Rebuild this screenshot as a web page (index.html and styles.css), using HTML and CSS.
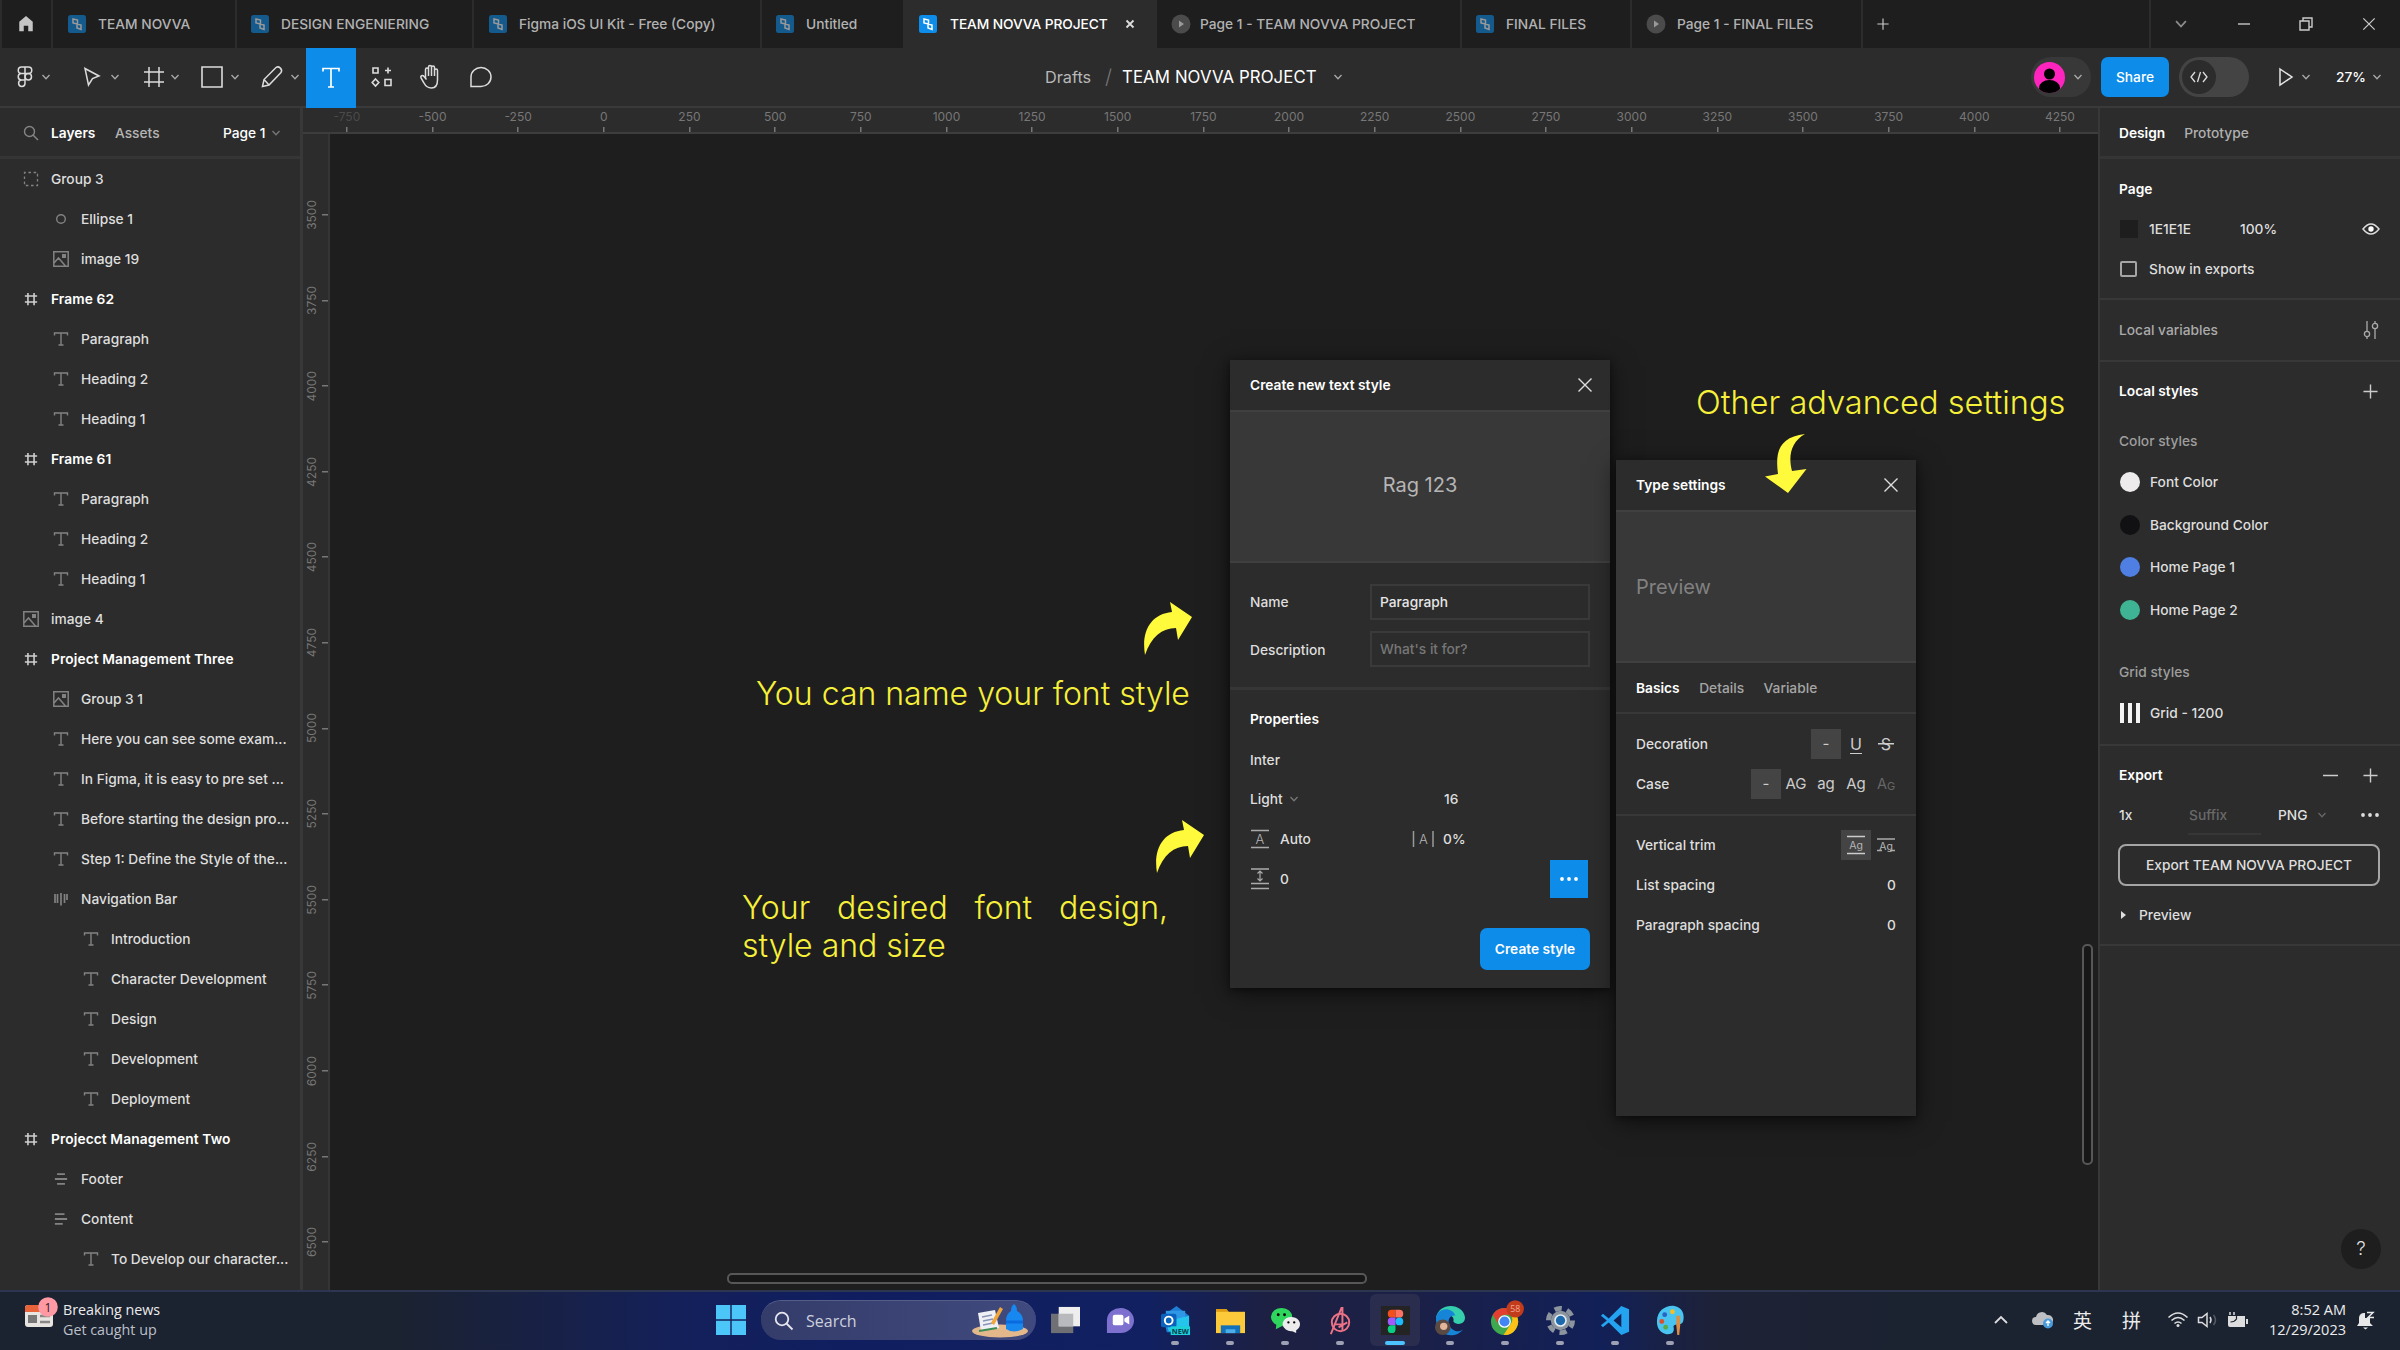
FILE: index.html
```html
<!DOCTYPE html>
<html lang="en">
<head>
<meta charset="utf-8">
<title>TEAM NOVVA PROJECT</title>
<link rel="stylesheet" href="styles.css">
</head>
<body>
<svg class="defs" aria-hidden="true">
  <symbol id="chev" viewBox="0 0 10 10"><path d="M1.5 3l3.5 3.8L8.5 3" fill="none" stroke="currentColor" stroke-width="1.3"/></symbol>
  <symbol id="file" viewBox="0 0 18 18"><rect width="18" height="18" rx="2.5" fill="#0d8ce9"/><path d="M5 4l4.500 1v4L5 8zM9 9l4 1v4.500l-4-1.500z" fill="none" stroke="#fff" stroke-width="1.5"/></symbol>
  <symbol id="playtab" viewBox="0 0 20 20"><circle cx="10" cy="10" r="9.5" fill="#4b4b4b"/><path d="M8 6.5v7l5-3.5z" fill="#999"/></symbol>
  <symbol id="txt" viewBox="0 0 16 16"><path d="M1.5 4.5V2h13v2.500M8 2v12M5.500 14h5" fill="none" stroke="currentColor" stroke-width="1.4"/></symbol>
  <symbol id="frame" viewBox="0 0 16 16"><path d="M4.500 1v14M11.500 1v14M1 4.500h14M1 11.500h14" fill="none" stroke="currentColor" stroke-width="1.800"/></symbol>
  <symbol id="img" viewBox="0 0 16 16"><path d="M.8.8h14.400v14.400H.8zM1 12l4.500-5 7 8" fill="none" stroke="currentColor" stroke-width="1.500"/><rect x="9" y="3" width="4" height="4" fill="currentColor"/></symbol>
  <symbol id="group" viewBox="0 0 16 16"><rect x="1.500" y="1.500" width="13" height="13" fill="none" stroke="currentColor" stroke-width="1.300" stroke-dasharray="2.600 2.600" stroke-dashoffset="1.300"/></symbol>
  <symbol id="oval" viewBox="0 0 16 16"><circle cx="8" cy="8" r="4.300" fill="none" stroke="currentColor" stroke-width="1.400"/></symbol>
  <symbol id="cols" viewBox="0 0 16 16"><path d="M2 3v9M4.500 3v9M8 2v12.500M11.500 3v9M14 3v6" fill="none" stroke="currentColor" stroke-width="1.700"/></symbol>
  <symbol id="hcen" viewBox="0 0 16 16"><path d="M3.500 2.500h9M1 8h14M3.500 13.500h9" fill="none" stroke="currentColor" stroke-width="2.100"/></symbol>
  <symbol id="hleft" viewBox="0 0 16 16"><path d="M1 2.500h11M1 8h14M1 13.500h9" fill="none" stroke="currentColor" stroke-width="2.100"/></symbol>
  <symbol id="close" viewBox="0 0 16 16"><path d="M1.500 1.500l13 13M14.500 1.500l-13 13" fill="none" stroke="currentColor" stroke-width="1.400"/></symbol>
  <symbol id="close-bold" viewBox="0 0 10 10"><path d="M1.500 1.500l7 7M8.500 1.500l-7 7" fill="none" stroke="currentColor" stroke-width="1.800"/></symbol>
  <symbol id="plus" viewBox="0 0 16 16"><path d="M8 .5v15M.5 8h15" fill="none" stroke="currentColor" stroke-width="1.500"/></symbol>
  <symbol id="dots" viewBox="0 0 20 6"><g fill="currentColor"><circle cx="3" cy="3" r="1.900"/><circle cx="10" cy="3" r="1.900"/><circle cx="17" cy="3" r="1.900"/></g></symbol>
  <symbol id="arrow" viewBox="0 0 50 54"><path d="M2 53C-2 29 8 12 29 10L27 0 49 15 35 38 33 26C19 26 8 35 2 53z" fill="#fffa3c"/></symbol>
</svg>

<header class="tabs">
  <div class="tab home"><svg width="18" height="20" viewBox="0 0 18 20"><path d="M9 1l7.500 6.500V18h-5v-6h-5v6h-5V7.500z" fill="#c4c4c4"/></svg></div>
  <div class="tab t1"><svg><use href="#file"/></svg><span>TEAM NOVVA</span></div>
  <div class="tab t2"><svg><use href="#file"/></svg><span>DESIGN ENGENIERING</span></div>
  <div class="tab t3"><svg><use href="#file"/></svg><span>Figma iOS UI Kit - Free (Copy)</span></div>
  <div class="tab t4"><svg><use href="#file"/></svg><span>Untitled</span></div>
  <div class="tab t5 active"><svg><use href="#file"/></svg><span>TEAM NOVVA PROJECT</span><svg class="tab-close"><use href="#close-bold"/></svg></div>
  <div class="tab t6 proto"><svg><use href="#playtab"/></svg><span>Page 1 - TEAM NOVVA PROJECT</span></div>
  <div class="tab t7"><svg><use href="#file"/></svg><span>FINAL FILES</span></div>
  <div class="tab t8 proto"><svg><use href="#playtab"/></svg><span>Page 1 - FINAL FILES</span></div>
  <div class="tab add"><svg><use href="#plus"/></svg></div>
  <div class="winctl">
    <svg class="down" width="14" height="14"><use href="#chev"/></svg>
    <svg width="14" height="14" viewBox="0 0 14 14"><path d="M1 7h12" stroke="#bbb" stroke-width="1.500"/></svg>
    <svg width="14" height="14" viewBox="0 0 14 14"><path d="M1 4h9v9H1zM4 4V1h9v9h-3" fill="none" stroke="#ccc" stroke-width="1.400"/></svg>
    <svg width="14" height="14"><use href="#close"/></svg>
  </div>
</header>

<div class="toolbar">
  <div class="tool w1"><svg width="16" height="24" viewBox="0 0 16 24"><g fill="none" stroke="currentColor" stroke-width="1.500"><path d="M8 2H4.500a3.200 3.200 0 000 6.500H8zM8 2h3.500a3.200 3.200 0 010 6.500H8zM8 8.500H4.500a3.200 3.200 0 000 6.500H8zM8 15H4.500A3.200 3.200 0 108 18.200z"/><circle cx="11.300" cy="11.700" r="3.200"/></g></svg><svg class="cv"><use href="#chev"/></svg></div>
  <div class="tool w2"><svg width="20" height="22" viewBox="0 0 20 22"><path d="M3 2.500l14 7.500-6.500 2.500L6.500 19z" fill="none" stroke="currentColor" stroke-width="1.500"/></svg><svg class="cv"><use href="#chev"/></svg></div>
  <div class="tool w3"><svg width="22" height="22" viewBox="0 0 22 22"><path d="M6 1v20M16 1v20M1 6h20M1 16h20" stroke="currentColor" stroke-width="1.500"/></svg><svg class="cv"><use href="#chev"/></svg></div>
  <div class="tool w4"><svg width="22" height="22" viewBox="0 0 22 22"><path d="M1 1h20v20H1z" fill="none" stroke="currentColor" stroke-width="1.600"/></svg><svg class="cv"><use href="#chev"/></svg></div>
  <div class="tool w5"><svg width="24" height="24" viewBox="0 0 24 24"><path d="M2.500 21.500l1.500-7L16 2.500c3-2 7 2 5 5L9 20zM4 14.500l5 5.500" fill="none" stroke="currentColor" stroke-width="1.500"/></svg><svg class="cv"><use href="#chev"/></svg></div>
  <div class="tool selected"><svg width="20" height="24" viewBox="0 0 20 24"><path d="M2 5.500V2.500h16v3M10 2.500v18.500M7 21h6" fill="none" stroke="#fff" stroke-width="1.700"/></svg></div>
  <div class="tool plain"><svg width="22" height="22" viewBox="0 0 22 22"><g fill="none" stroke="currentColor" stroke-width="1.600"><path d="M2 2h5v5H2zM17 1.500v6M14 4.500h6M4.500 13l3.300 3.500-3.300 3.500-3.300-3.500zM14 13.500h6v6h-6z"/></g></svg></div>
  <div class="tool plain hand"><svg width="24" height="26" viewBox="0 0 24 26"><path d="M6 15V5.500c0-2 3-2 3 0V12 3c0-2 3-2 3 0v9V3.500c0-2 3-2 3 0V12 6.500c0-2 3-2 3 0V16c0 5-2 8-6 8s-6-2-7.500-5L1.500 14c-1-2 1.500-3.500 3-1.500L7 15.500" transform="translate(1.500)" fill="none" stroke="currentColor" stroke-width="1.500"/></svg></div>
  <div class="tool plain"><svg width="24" height="24" viewBox="0 0 24 24"><path d="M2 21.500V12A10 9.500 0 1112 21.500z" fill="none" stroke="currentColor" stroke-width="1.500"/></svg></div>
  <div class="title"><span class="drafts">Drafts</span><span class="slash">/</span><span class="name">TEAM NOVVA PROJECT</span><svg class="cv"><use href="#chev"/></svg></div>
  <div class="actions">
    <div class="user"><svg width="31" height="31" viewBox="0 0 31 31"><defs><clipPath id="av"><circle cx="15.500" cy="15.500" r="15.500"/></clipPath></defs><g clip-path="url(#av)"><path fill="#ff24bd" d="M0 0h31v31H0z"/><circle cx="15.500" cy="12" r="5.500"/><ellipse cx="15.500" cy="26" rx="10.500" ry="8"/></g></svg><svg class="cv"><use href="#chev"/></svg></div>
    <div class="share">Share</div>
    <div class="devmode"><span class="knob"><svg width="20" height="14" viewBox="0 0 20 14"><path d="M6 2L2 7l4 5M14 2l4 5-4 5M11.500 2l-3 10" fill="none" stroke="#ddd" stroke-width="1.300"/></svg></span></div>
    <svg class="play" width="16" height="20" viewBox="0 0 16 20"><path d="M2 2l12 8-12 8z" fill="none" stroke="#e4e4e4" stroke-width="1.500"/></svg>
    <svg class="cv"><use href="#chev"/></svg>
    <span class="pct">27%</span>
    <svg class="cv"><use href="#chev"/></svg>
  </div>
</div>

<main class="work">
  <aside class="layers">
    <div class="layers-head"><svg width="16" height="16" viewBox="0 0 16 16"><circle cx="6.500" cy="6.500" r="5" fill="none" stroke="#858585" stroke-width="1.400"/><path d="M10 10l5 5" stroke="#858585" stroke-width="1.400"/></svg><b>Layers</b><span class="assets">Assets</span><span class="page">Page 1</span><svg class="cv"><use href="#chev"/></svg></div>
    <div class="row"><svg><use href="#group"/></svg><span>Group 3</span></div>
    <div class="row i1"><svg><use href="#oval"/></svg><span>Ellipse 1</span></div>
    <div class="row i1"><svg><use href="#img"/></svg><span>image 19</span></div>
    <div class="row top"><svg><use href="#frame"/></svg><span>Frame 62</span></div>
    <div class="row i1"><svg><use href="#txt"/></svg><span>Paragraph</span></div>
    <div class="row i1"><svg><use href="#txt"/></svg><span>Heading 2</span></div>
    <div class="row i1"><svg><use href="#txt"/></svg><span>Heading 1</span></div>
    <div class="row top"><svg><use href="#frame"/></svg><span>Frame 61</span></div>
    <div class="row i1"><svg><use href="#txt"/></svg><span>Paragraph</span></div>
    <div class="row i1"><svg><use href="#txt"/></svg><span>Heading 2</span></div>
    <div class="row i1"><svg><use href="#txt"/></svg><span>Heading 1</span></div>
    <div class="row"><svg><use href="#img"/></svg><span>image 4</span></div>
    <div class="row top"><svg><use href="#frame"/></svg><span>Project Management Three</span></div>
    <div class="row i1"><svg><use href="#img"/></svg><span>Group 3 1</span></div>
    <div class="row i1"><svg><use href="#txt"/></svg><span>Here you can see some exam...</span></div>
    <div class="row i1"><svg><use href="#txt"/></svg><span>In Figma, it is easy to pre set ...</span></div>
    <div class="row i1"><svg><use href="#txt"/></svg><span>Before starting the design pro...</span></div>
    <div class="row i1"><svg><use href="#txt"/></svg><span>Step 1: Define the Style of the...</span></div>
    <div class="row i1"><svg><use href="#cols"/></svg><span>Navigation Bar</span></div>
    <div class="row i2"><svg><use href="#txt"/></svg><span>Introduction</span></div>
    <div class="row i2"><svg><use href="#txt"/></svg><span>Character Development</span></div>
    <div class="row i2"><svg><use href="#txt"/></svg><span>Design</span></div>
    <div class="row i2"><svg><use href="#txt"/></svg><span>Development</span></div>
    <div class="row i2"><svg><use href="#txt"/></svg><span>Deployment</span></div>
    <div class="row top"><svg><use href="#frame"/></svg><span>Projecct Management Two</span></div>
    <div class="row i1"><svg class="sm"><use href="#hcen"/></svg><span>Footer</span></div>
    <div class="row i1"><svg class="sm"><use href="#hleft"/></svg><span>Content</span></div>
    <div class="row i2"><svg><use href="#txt"/></svg><span>To Develop our character...</span></div>
  </aside>

  <section class="stage">
    <div class="ruler-x"><i class="dim">-750</i><i>-500</i><i>-250</i><i>0</i><i>250</i><i>500</i><i>750</i><i>1000</i><i>1250</i><i>1500</i><i>1750</i><i>2000</i><i>2250</i><i>2500</i><i>2750</i><i>3000</i><i>3250</i><i>3500</i><i>3750</i><i>4000</i><i>4250</i></div>
    <div class="stage-body">
      <div class="ruler-y"><i><b>3500</b></i><i><b>3750</b></i><i><b>4000</b></i><i><b>4250</b></i><i><b>4500</b></i><i><b>4750</b></i><i><b>5000</b></i><i><b>5250</b></i><i><b>5500</b></i><i><b>5750</b></i><i><b>6000</b></i><i><b>6250</b></i><i><b>6500</b></i></div>
      <div class="canvas"></div>
    </div>
  </section>

  <aside class="props">
    <div class="props-tabs"><b>Design</b><span>Prototype</span></div>
    <section class="sec page-sec">
      <div class="prow"><b>Page</b></div>
      <div class="prow"><i class="sw"></i><span class="hex">1E1E1E</span><span>100%</span><svg class="end" width="18" height="12" viewBox="0 0 18 12"><path d="M1 6q8-10 16 0-8 10-16 0z" fill="none" stroke="#ddd" stroke-width="1.500"/><circle cx="9" cy="6" r="2.700" fill="#fff"/></svg></div>
      <div class="prow"><i class="cb"></i><span>Show in exports</span></div>
    </section>
    <section class="sec var-sec">
      <div class="prow mute">Local variables<svg class="end" width="18" height="20" viewBox="0 0 18 20"><g fill="none" stroke="#aaa" stroke-width="1.300"><path d="M5 1v10M5 17v2M13 9v10M13 1v2"/><circle cx="5" cy="14" r="2.600"/><circle cx="13" cy="6" r="2.600"/></g></svg></div>
    </section>
    <section class="sec style-sec">
      <div class="prow"><b>Local styles</b><svg class="end pl" width="15" height="15"><use href="#plus"/></svg></div>
      <div class="prow sub c">Color styles</div>
      <div class="srow"><i class="dot c1"></i>Font Color</div>
      <div class="srow"><i class="dot c2"></i>Background Color</div>
      <div class="srow"><i class="dot c3"></i>Home Page 1</div>
      <div class="srow"><i class="dot c4"></i>Home Page 2</div>
      <div class="prow sub g">Grid styles</div>
      <div class="srow"><i class="bars"></i>Grid - 1200</div>
    </section>
    <section class="sec export-sec">
      <div class="prow"><b>Export</b><svg class="end minus" width="15" height="15" viewBox="0 0 15 15"><path d="M0 7.500h15" stroke="#ccc" stroke-width="1.500"/></svg><svg class="pl" width="15" height="15"><use href="#plus"/></svg></div>
      <div class="prow"><span class="scale">1x</span><span class="suffix">Suffix</span><span class="fmt">PNG</span><svg class="cv"><use href="#chev"/></svg><svg class="end" width="20" height="6"><use href="#dots"/></svg></div>
      <div class="expbtn">Export TEAM NOVVA PROJECT</div>
      <div class="prow preview"><i class="tri"></i>Preview</div>
    </section>
    <div class="help">?</div>
  </aside>

  <div class="hbar"></div>
  <div class="vbar"></div>

  <div class="dialog create">
    <div class="dhead"><b>Create new text style</b><svg width="16" height="16"><use href="#close"/></svg></div>
    <div class="sample">Rag 123</div>
    <div class="fields">
      <label>Name</label><div class="input">Paragraph</div>
      <label class="desc">Description</label><div class="input ph">What's it for?</div>
    </div>
    <div class="typo">
      <div class="r first"><b>Properties</b></div>
      <div class="r second">Inter</div>
      <div class="r"><span class="half">Light<svg class="cv"><use href="#chev"/></svg></span><span class="size">16</span></div>
      <div class="r"><span class="half"><svg width="20" height="20" viewBox="0 0 20 20"><path d="M1 1.500h18M1 18.500h18" stroke="#aaa" stroke-width="1.500"/><text x="10" y="14.500" class="ic">A</text></svg><em>Auto</em></span><svg class="lspc" width="24" height="18" viewBox="0 0 24 18"><path d="M1.500 1v16M21 1v16" stroke="#999" stroke-width="1.500"/><text x="11.500" y="13.500" class="ic">A</text></svg><em class="ls">0%</em></div>
      <div class="r"><span class="half"><svg width="20" height="22" viewBox="0 0 20 22"><path d="M1 1h18M1 15.500h18M1 20.500h18" stroke="#aaa" stroke-width="1.500"/><path d="M10 3v10M7.500 5.500L10 3l2.500 2.500M7.500 10.500L10 13l2.500-2.500" fill="none" stroke="#aaa" stroke-width="1.200"/></svg><em>0</em></span><span class="more"><svg width="20" height="6"><use href="#dots"/></svg></span></div>
      <div class="create-btn">Create style</div>
    </div>
  </div>

  <div class="dialog type">
    <div class="dhead"><b>Type settings</b><svg width="16" height="16"><use href="#close"/></svg></div>
    <div class="sample left">Preview</div>
    <div class="dtabs"><b>Basics</b><span>Details</span><span>Variable</span></div>
    <div class="block">
      <div class="r"><span>Decoration</span><i class="opt on">-</i><i class="opt und">U</i><i class="opt str">S</i></div>
      <div class="r"><span>Case</span><i class="opt on">-</i><i class="opt">AG</i><i class="opt">ag</i><i class="opt">Ag</i><i class="opt off">A<small>G</small></i></div>
    </div>
    <div class="block last">
      <div class="r"><span>Vertical trim</span><i class="opt on"><svg width="20" height="20" viewBox="0 0 20 20"><path d="M1 1.500h18M1 18.500h18" stroke="#ccc" stroke-width="1.300"/><text x="10" y="13.500" class="ic b">Ag</text></svg></i><i class="opt"><svg width="20" height="20" viewBox="0 0 20 20"><path d="M1 4h18M1 15.500h5M14 15.500h5" stroke="#aaa" stroke-width="1.300"/><text x="10" y="14.500" class="ic b">Ag</text></svg></i></div>
      <div class="r"><span>List spacing</span><em>0</em></div>
      <div class="r"><span>Paragraph spacing</span><em>0</em></div>
    </div>
  </div>

  <p class="note n1">Other advanced settings</p>
  <p class="note n2">You can name your font style</p>
  <p class="note n3">Your desired font design, style and size</p>
  <svg class="arr a1"><use href="#arrow"/></svg>
  <svg class="arr a2"><use href="#arrow"/></svg>
  <svg class="arr a3" viewBox="0 0 42 60"><path d="M40 0C14 3 10 18 13 40L0 42.500 23 59 41.500 35 27 37C23 22 26 8 40 0z" fill="#fffa3c"/></svg>
</main>

<footer class="taskbar">
  <div class="news"><svg width="34" height="34" viewBox="0 0 34 34"><rect x="1" y="8" width="28" height="22" rx="3" fill="#e8e4e0"/><path d="M1 15v-4a3 3 0 013-3h25v7z" fill="#e8623a"/><path d="M4 18h9v8H4z" fill="#777"/><path d="M16 19h10M16 25h10" stroke="#888" stroke-width="2.500"/><circle cx="24" cy="10" r="9.800" fill="#ff99a4"/><text x="24" y="14.500" text-anchor="middle" font-size="12" fill="#222">1</text></svg><div>Breaking news<br><span>Get caught up</span></div></div>
  <div class="apps">
    <svg class="win" width="30" height="30" viewBox="0 0 30 30"><path d="M0 0h14.300v14.300H0zM15.700 0H30v14.300H15.700zM0 15.700h14.300V30H0zM15.700 15.700H30V30H15.700z" fill="#4cc5f8"/></svg>
    <div class="search"><svg width="20" height="20" viewBox="0 0 20 20"><circle cx="8" cy="8" r="6.300" fill="none" stroke="#e6e6ee" stroke-width="1.800"/><path d="M12.500 12.500l6 6" stroke="#e6e6ee" stroke-width="1.800"/></svg><span>Search</span><svg width="58" height="34" viewBox="0 0 58 34"><ellipse cx="29" cy="27" rx="28" ry="6.500" fill="#e3b98c"/><path d="M7 9l17-3 4 18-18 3z" fill="#eef0f5"/><path d="M11 13l10-2M12 17l10-2M12 21l10-2" stroke="#8a94b8" stroke-width="1.500"/><path d="M20 19L29 3l3 2-9 16z" fill="#f0a63a"/><path d="M8 27l18-3" stroke="#3d8b55" stroke-width="2"/><path d="M43 0q3 2 3 7 6 3 6 10v8q-9 5-17 0v-8q0-7 5-10 0-5 3-7z" fill="#1688f0"/><path d="M35 18h17" stroke="#0a6be0" stroke-width="3"/></svg></div>
    <div class="app"><svg viewBox="0 0 32 32"><path d="M1 9h23v20H1z" fill="#6f7074"/><path d="M9 2h22v20H9z" fill="#eee"/><path d="M9 9h15v13H9z" fill="#b9babd"/></svg></div>
    <div class="app"><svg viewBox="0 0 32 32"><path d="M2 29V15a14 13 0 1114 14z" fill="#7d70cf"/><rect x="8" y="10" width="11" height="11" rx="2" fill="#fff"/><path d="M20 14l5-3v9l-5-3z" fill="#fff"/></svg></div>
    <div class="app run"><svg viewBox="0 0 32 32"><path d="M3 11L17 1l13 10v17H7z" fill="#1f7fd6"/><path d="M6 6h20v12H6z" fill="#2f98e6"/><path d="M6 17l24-6v16H9z" fill="#25c4ec"/><rect x="1" y="9" width="16" height="14" rx="2" fill="#0a62bd"/><circle cx="9" cy="16" r="4" fill="none" stroke="#fff" stroke-width="2"/><rect x="11" y="22" width="20" height="9" fill="#1bd0d6"/><text x="21" y="29.500" text-anchor="middle" font-size="7.500" font-weight="700" fill="#073b52">NEW</text></svg></div>
    <div class="app run"><svg viewBox="0 0 32 32"><path d="M1 4h11l3 4H1z" fill="#dd9b13"/><path d="M1 7h30v22H1z" fill="#fcc93a"/><path d="M6 21h20v8H6z" fill="#1370ba"/><path d="M11 25h10v4H11z" fill="#49aee9"/></svg></div>
    <div class="app run"><svg viewBox="0 0 32 32"><path d="M1 12a11 9.500 0 1111 10l-6 3 .5-4.500Q1 17 1 12z" fill="#2fd65d"/><circle cx="8.500" cy="10" r="1.500"/><circle cx="15" cy="10" r="1.500"/><path d="M13 20a9 7.500 0 1114 6v3l-4-2a9 8 0 01-10-7z" fill="#ececec"/><circle cx="19" cy="18" r="1.200"/><circle cx="25" cy="18" r="1.200"/></svg></div>
    <div class="app run"><svg viewBox="0 0 32 32"><g fill="none" stroke="#ee7285" stroke-width="2"><circle cx="16" cy="18" r="9"/><path d="M6 30L17 3l1 0v23M9 20h11M14 23l9-5"/></g></svg></div>
    <div class="app run cur"><svg viewBox="0 0 32 32"><rect x="1" y="1" width="30" height="30" fill="#242424"/><path d="M16 5h-4a4 4 0 000 8h4z" fill="#f24e1e"/><path d="M16 5h4a4 4 0 010 8h-4z" fill="#ff7262"/><path d="M16 13h-4a4 4 0 000 8h4z" fill="#a259ff"/><circle cx="20" cy="17" r="4" fill="#1abcfe"/><path d="M16 21h-4a4 4 0 104 4z" fill="#0acf83"/></svg></div>
    <div class="app run"><svg viewBox="0 0 32 32"><path d="M1 14C3-3 29-3 31 13c0 8-10 8-12 4 2-8-11-9-18-3z" fill="#35cfae"/><path d="M1 15C1 2 18 1 21 11c-8-2-11 12 1 16 4 1 7-2 7-2-9 12-28 6-28-10z" fill="#1685d8"/><circle cx="8" cy="23" r="8" fill="#5b4a44"/><circle cx="9" cy="22" r="3.800" fill="#e3b59a"/></svg></div>
    <div class="app run"><svg viewBox="0 0 32 32"><circle cx="15" cy="17" r="14" fill="#3ea84e"/><path d="M2.900 10A14 14 0 0127.100 10H15a7 7 0 00-6 10z" fill="#e43e31"/><path d="M27.100 10A14 14 0 0114 31l7-11a7 7 0 000-10z" fill="#fbc116"/><circle cx="15" cy="17" r="6.500" fill="#fff"/><circle cx="15" cy="17" r="5.200" fill="#4285f4"/><circle cx="26" cy="4" r="9" fill="#c23c1c"/><text x="26" y="7.500" text-anchor="middle" font-size="9" fill="#f2a795">58</text></svg></div>
    <div class="app run"><svg viewBox="0 0 32 32"><circle cx="16" cy="16" r="12.500" fill="none" stroke="#8c959d" stroke-width="5" stroke-dasharray="7.500 5.590"/><circle cx="16" cy="16" r="10" fill="#8c959d"/><circle cx="16" cy="16" r="6.500" fill="#e6edf4"/><circle cx="16" cy="16" r="4.800" fill="#1c69ae"/></svg></div>
    <div class="app run"><svg viewBox="0 0 32 32"><path d="M22 1l8 3.500v23L22 31 9 18l-6 5-2-2 6-5-6-5 2-2 6 5zM22 9l-8 7 8 7z" fill="#23a3f0"/></svg></div>
    <div class="app run"><svg viewBox="0 0 32 32"><path d="M2 17C2 5 12 0 20 1s11 9 9 16c-2 5-8 1-10 5 2 7-3 9-8 8-6-2-9-6-9-13z" fill="#49c3ef"/><circle cx="10" cy="10" r="2.500" fill="#2764c4"/><circle cx="18" cy="7" r="2.500" fill="#f2c029"/><circle cx="7" cy="17" r="2.500" fill="#d65031"/><circle cx="11" cy="23" r="2.500" fill="#59ac45"/><path d="M22 11h4v10l-1 10h-2l-1-10z" fill="#d98e45"/></svg></div>
  </div>
  <div class="tray">
    <svg class="up" width="16" height="10" viewBox="0 0 16 10"><path d="M2 8l6-6 6 6" fill="none" stroke="#ddd" stroke-width="1.800"/></svg>
    <svg class="cloud" width="22" height="18" viewBox="0 0 22 18"><path d="M4 14a4 4 0 010-8 6 6 0 0111-2 5 5 0 012 10z" fill="#bdbfc2"/><circle cx="16" cy="12.500" r="5" fill="#489bdc"/><path d="M16 10v5M14 12l2-2 2 2" fill="none" stroke="#fff" stroke-width="1.300"/></svg>
    <span class="zh">英</span><span class="zh">拼</span>
    <svg class="wifi" width="22" height="16" viewBox="0 0 22 16"><g fill="none" stroke="#ddd" stroke-width="1.600"><path d="M1.500 5.500q9.500-9 19 0M4.500 8.500q6.500-6 13 0M7.500 11.500q3.500-3 7 0"/></g><circle cx="11" cy="13.500" r="1.500" fill="#ddd"/></svg>
    <svg class="spk" width="22" height="16" viewBox="0 0 22 16"><path d="M1.500 5.500h3.500l5-4v13l-5-4H1.500z" fill="none" stroke="#ddd" stroke-width="1.500"/><path d="M13 5q2 3 0 6" fill="none" stroke="#ddd" stroke-width="1.500"/><path d="M16.500 3q4 5 0 10" fill="none" stroke="#555b68" stroke-width="1.500"/></svg>
    <svg class="bat" width="22" height="16" viewBox="0 0 22 16"><path d="M1 4h17v11H3q-2 0-2-2zM19 7h2v5h-2z" fill="#ddd"/><path d="M3 0v3M7 0v3" stroke="#ddd" stroke-width="1.500"/><path d="M9.500 4v3q-2 3-6 3" fill="none" stroke="#1b2230" stroke-width="1.200"/></svg>
    <div class="clock">8:52 AM<br>12/29/2023</div>
    <svg class="bell" width="19" height="19" viewBox="0 0 19 19"><path d="M1 15l2-3V7a5 5 0 016-5v5h5v5l3 3zM7 16.500h5l-2.500 2z" fill="#e8e8e8"/><path d="M11 1.500h6l-5 5h6" fill="none" stroke="#e8e8e8" stroke-width="1.500"/></svg>
  </div>
</footer>
</body>
</html>
```
FILE: styles.css
```css
* { box-sizing: border-box; }
body { margin: 0; width: 2400px; height: 1350px; overflow: hidden; display: flex; flex-direction: column; background: #1e1e1e; color: #dedede; font: 500 13.75px/20px Inter, "Liberation Sans", sans-serif; }
i, em { font-style: normal; }
b { font-weight: 600; color: #fff; }
.defs { position: absolute; width: 0; height: 0; }
svg { flex: none; display: block; overflow: visible; }
.cv { width: 10px; height: 10px; color: #a8a8a8; }

.tabs { height: 48px; flex: none; display: flex; background: #1e1e1e; color: #b2b2b2; }
.tab { display: flex; align-items: center; border-left: 2px solid #2c2c2c; padding-left: 14px; white-space: nowrap; }
.tab > svg:first-child { width: 18px; height: 18px; opacity: .55; margin-right: 12px; }
.home { width: 51px; padding-left: 15px; }
.home > svg:first-child { opacity: 1; }
.t1 { width: 184px; padding-left: 15px; }
.t2 { width: 237px; }
.t3 { width: 288px; padding-left: 15px; }
.t4 { width: 143px; }
.t5 { width: 252px; letter-spacing: -.1px; }
.t6 { width: 305px; }
.t7 { width: 170px; }
.t8 { width: 231px; }
.tab.proto > svg:first-child { width: 20px; height: 20px; opacity: 1; margin-right: 9px; }
.tab.t8.proto > svg:first-child { margin-right: 11px; }
.tab.active { background: #2c2c2c; color: #fff; }
.tab.active > svg:first-child { opacity: 1; margin-right: 13px; }
.tab-close { width: 10px; height: 10px; margin-left: auto; margin-right: 20px; color: #ddd; }
.add { width: 288px; color: #ccc; }
.tab.add > svg:first-child { width: 12px; height: 12px; opacity: 1; }
.winctl { flex: 1; border-left: 2px solid #2c2c2c; display: flex; align-items: center; gap: 48.500px; padding-left: 23px; color: #ccc; }
.winctl .down { color: #8c8c8c; }

.toolbar { height: 60px; flex: none; display: flex; background: #2c2c2c; border-bottom: 2px solid #3a3a3a; color: #dcdcdc; }
.tool { display: flex; align-items: center; }
.tool .cv { margin-left: auto; }
.w1 { width: 51px; padding-left: 17px; }
.w2 { width: 69px; padding-left: 31px; }
.w3 { width: 60px; padding-left: 23px; }
.w4 { width: 60px; padding-left: 21px; }
.w5 { width: 60px; padding-left: 20px; }
.selected { width: 50px; height: 60px; margin-left: 6px; background: #0d8ce9; justify-content: center; }
.plain { width: 49px; justify-content: center; }
.tool.plain:nth-child(7) { width: 51px; }
.hand { padding-right: 3px; }
.title { display: flex; align-items: center; margin-left: 540px; font-size: 16.250px; font-weight: 400; white-space: nowrap; }
.drafts { width: 57px; color: #b8b8b8; }
.slash { width: 20px; padding-left: 3px; color: #777; font-size: 20px; font-weight: 300; }
.name { width: 211px; color: #fff; font-size: 16.800px; letter-spacing: .1px; }
.actions { display: flex; align-items: center; margin-left: auto; padding-right: 18px; }
.user { width: 60px; height: 40px; border-radius: 20px; background: #383838; display: flex; align-items: center; justify-content: space-between; padding: 0 8px 0 3px; }
.share { width: 68px; height: 40px; margin-left: 10px; border-radius: 7px; background: #0d8ce9; color: #fff; display: flex; align-items: center; justify-content: center; }
.devmode { width: 70px; height: 40px; margin-left: 10px; border-radius: 20px; background: #444; padding: 3px; }
.knob { width: 34px; height: 34px; border-radius: 50%; background: #2c2c2c; display: flex; align-items: center; justify-content: center; }
.play { margin-left: 29px; margin-right: 7px; }
.pct { margin-left: 25px; margin-right: 6px; width: 30px; color: #fff; }

.work { position: relative; height: 1182px; flex: none; display: flex; }
.layers { width: 303px; flex: none; background: #2c2c2c; border-right: 3px solid #383838; overflow: hidden; white-space: nowrap; }
.layers-head { height: 51px; border-bottom: 3px solid #353535; display: flex; align-items: center; padding-left: 23px; padding-top: 1px; }
.layers-head b { margin-left: 12px; width: 64px; }
.assets { width: 108px; color: #b5b5b5; }
.page { width: 48px; color: #fff; }
.layers-head .cv { color: #777; }
.row { height: 40px; display: flex; align-items: center; padding-left: 23px; color: #dedede; }
.row svg { width: 16px; height: 16px; margin-right: 12px; color: #828282; }
.row svg.sm { width: 14px; height: 14px; margin: 0 13px 0 1px; }
.row.i1 { padding-left: 53px; }
.row.i2 { padding-left: 83px; }
.row.top { color: #fff; font-weight: 600; letter-spacing: .1px; }
.row.top svg { width: 14px; height: 14px; margin: 0 13px 0 1px; color: #d0d0d0; }

.stage { width: 1795px; flex: none; display: flex; flex-direction: column; overflow: hidden; }
.ruler-x { height: 26px; flex: none; background: #2c2c2c; border-bottom: 2px solid #3d3d3d; display: flex; padding-left: 1px; }
.ruler-x i { width: 85.660px; flex: none; text-align: center; font-size: 12px; line-height: 18px; font-weight: 400; color: #777; background: linear-gradient(#777, #777) 50% 100% / 1.500px 5px no-repeat; }
.ruler-x .dim { color: #4a4a4a; }
.stage-body { flex: 1; display: flex; min-height: 0; }
.ruler-y { width: 27px; flex: none; background: #2c2c2c; border-right: 2px solid #353535; padding-top: 38px; display: flex; flex-direction: column; overflow: hidden; }
.ruler-y i { height: 85.600px; flex: none; display: flex; align-items: center; background: linear-gradient(#777, #777) 100% 50% / 6px 1.500px no-repeat; }
.ruler-y b { writing-mode: vertical-rl; transform: rotate(180deg); font-size: 12px; line-height: 17px; font-weight: 400; color: #777; }
.canvas { flex: 1; background: #1e1e1e; }

.props { position: relative; flex: 1; background: #2c2c2c; border-left: 2px solid #383838; white-space: nowrap; }
.props-tabs { height: 51px; border-bottom: 3px solid #353535; display: flex; align-items: center; gap: 19px; padding-left: 19px; padding-top: 1px; color: #b0b0b0; }
.sec { border-bottom: 2px solid #383838; padding-left: 19px; padding-right: 24px; }
.prow { height: 40px; display: flex; align-items: center; }
.page-sec { height: 141px; padding-top: 10px; }
.sw { width: 18px; height: 18px; background: #1e1e1e; margin: 0 11px 0 1px; }
.cb { width: 17px; height: 16px; border: 2px solid #a5a5a5; border-radius: 2px; margin: 0 12px 0 1px; }
.hex { width: 91px; }
.end { margin-left: auto; }
.pl { margin-right: 2px; color: #ccc; }
.var-sec { height: 62px; padding-top: 10px; }
.mute { color: #aaa; }
.style-sec { height: 384px; padding-top: 9px; }
.sub { color: #9e9e9e; }
.c { margin-top: 10px; }
.g { margin-top: 21px; }
.srow { height: 42.500px; display: flex; align-items: center; }
.dot { width: 20px; height: 20px; border-radius: 50%; margin: 0 10px 0 1px; }
.c1 { background: #edebeb; }
.c2 { background: #111113; }
.c3 { background: #4f7fe3; }
.c4 { background: #3fb495; }
.bars { width: 20px; height: 20px; margin: 0 10px 0 1px; background: repeating-linear-gradient(90deg, #f4f4f4 0 4px, transparent 4px 8px); }
.export-sec { height: 200px; padding-top: 9px; }
.minus { margin-right: 25px; }
.scale { width: 69px; }
.suffix { width: 73px; height: 40px; line-height: 40px; padding-left: 1px; margin-right: 17px; color: #696969; border-bottom: 2px solid #363636; }
.fmt { width: 34px; margin-right: 5px; }
.fmt + .cv { color: #666; }
.expbtn { height: 42px; width: 262px; margin-top: 9px; margin-left: -1px; border: 2px solid #a5a5a5; border-radius: 8px; display: flex; align-items: center; justify-content: center; }
.preview { margin-top: 9px; }
.tri { border: solid transparent; border-width: 4px 0 4px 5px; border-left-color: #ddd; margin: 0 13px 0 2px; }
.help { position: absolute; right: 23px; bottom: 21px; width: 40px; height: 40px; border-radius: 50%; background: #1e1e1e; display: flex; align-items: center; justify-content: center; font-size: 19px; font-weight: 300; color: #ddd; }

.hbar, .vbar { position: absolute; border: 2px solid #575757; border-radius: 5px; background: #171717; }
.hbar { left: 727px; top: 1165px; width: 640px; height: 11px; }
.vbar { left: 2082px; top: 836px; width: 11px; height: 221px; }

.dialog { position: absolute; background: #2c2c2c; box-shadow: 0 5px 24px rgba(0,0,0,.55), 0 2px 6px rgba(0,0,0,.4); }
.create { left: 1230px; top: 252px; width: 380px; height: 628px; }
.type { left: 1616px; top: 352px; width: 300px; height: 656px; }
.dhead { height: 52px; border-bottom: 2px solid #404040; display: flex; align-items: center; justify-content: space-between; padding: 0 17px 0 20px; }
.sample { height: 151px; background: #383838; border-bottom: 2px solid #404040; display: flex; align-items: center; justify-content: center; padding-bottom: 3px; font-size: 20px; font-weight: 400; color: #b5b5b5; }
.sample.left { justify-content: flex-start; padding-left: 20px; padding-bottom: 0; color: #818181; }
.fields { height: 127px; border-bottom: 3px solid #363636; display: grid; grid-template: 36px 36px / 120px 220px; row-gap: 11px; padding: 21px 20px 0; align-items: center; }
.desc { padding-top: 2px; }
.input { height: 36px; border: 2px solid #3a3a3a; padding-left: 8px; line-height: 32px; color: #e6e6e6; }
.input.ph { color: #777; }
.typo { padding: 8px 20px 0; }
.typo .r { height: 40px; display: flex; align-items: center; }
.typo .first { height: 42px; }
.typo .second { height: 39px; }
.half { width: 192px; display: flex; align-items: center; }
.half em { margin-left: 10px; }
.half .cv { margin-left: 6px; color: #777; }
.size { margin-left: 2px; }
.lspc { margin-left: -30px; }
.ls { margin-left: 7px; }
.ic { font: 300 13px Inter, sans-serif; fill: #b5b5b5; text-anchor: middle; }
.ic.b { font-size: 10.500px; font-weight: 400; }
.more { width: 38px; height: 38px; background: #0d8ce9; color: #fff; display: flex; align-items: center; justify-content: center; margin-left: 108px; }
.create-btn { width: 110px; height: 42px; margin: 29px 0 0 auto; border-radius: 7px; background: #0d8ce9; color: #fff; font-weight: 600; display: flex; align-items: center; justify-content: center; }

.dtabs { height: 51px; border-bottom: 2px solid #383838; display: flex; align-items: center; padding-left: 20px; gap: 19.500px; color: #a5a5a5; }
.block { height: 102px; padding: 10px 15px 0 20px; border-bottom: 2px solid #383838; }
.block.last { border: 0; height: auto; padding-top: 9px; }
.block .r { height: 40px; display: flex; align-items: center; }
.block .r span { margin-right: auto; }
.block em { margin-right: 5px; }
.opt { width: 30px; height: 30px; display: flex; align-items: center; justify-content: center; font-size: 15px; font-weight: 400; color: #cdcdcd; }
.opt.on { background: #444; }
.opt.und { text-decoration: underline; text-underline-offset: 3px; font-size: 16px; }
.opt.str { font-size: 16px; background: linear-gradient(#cdcdcd, #cdcdcd) 50% 50% / 16px 1.500px no-repeat; }
.opt.off { color: #666; font-size: 14.500px; }
.opt small { font-size: 11px; padding-top: 3px; }

.note { position: absolute; margin: 0; color: #f6f03a; font-size: 32px; line-height: 38px; font-weight: 300; white-space: nowrap; }
.n1 { left: 1696px; top: 275px; font-size: 32.600px; }
.n2 { left: 756px; top: 567px; }
.n3 { left: 742px; top: 781px; width: 426px; white-space: normal; text-align: justify; }
.arr { position: absolute; width: 50px; height: 54px; }
.a1 { left: 1143px; top: 494px; }
.a2 { left: 1155px; top: 712px; }
.a3 { left: 1765px; top: 326px; width: 42px; height: 60px; }

.taskbar { height: 60px; flex: none; display: flex; border-top: 2px solid #2c3650; background: linear-gradient(90deg, #1b2230 0, #1b2230 400px, #14205a 680px, #101e60 850px, #112060 1150px, #1d2042 1270px, #1b2046 1400px, #122058 1600px, #1e2236 1720px, #1b2230 1900px); font-family: "Open Sans", "Noto Sans CJK SC", sans-serif; font-weight: 400; color: #ececec; }
.news { width: 716px; display: flex; padding-left: 24px; font-size: 14.300px; line-height: 20px; }
.news div { margin: 8px 0 0 5px; }
.news span { color: #bcc0c8; }
.news svg { margin-top: 5px; }
.apps { display: flex; align-items: center; height: 56px; }
.search { width: 275px; height: 40px; margin-left: 15px; margin-right: 4px; border-radius: 20px; background: linear-gradient(90deg, #343c6a, #414a7e); border-top: 1px solid #555d8a; display: flex; align-items: center; padding: 0 7px 0 13px; }
.search span { flex: 1; margin-left: 12px; font-size: 16px; color: #cdd0dd; }
.app { width: 50px; height: 52px; margin-right: 5px; display: flex; align-items: center; justify-content: center; position: relative; border-radius: 6px; }
.app > svg { width: 31px; height: 31px; }
.app.run::after { content: ""; position: absolute; left: 21px; bottom: 1px; width: 8px; height: 4px; border-radius: 2px; background: #9da1b3; }
.app.cur { background: #2a2d4e; }
.app.cur::after { left: 15px; width: 20px; background: #4cc2ff; }
.tray { margin-left: auto; display: flex; align-items: center; height: 56px; padding-right: 25px; }
.up { margin-right: 2px; }
.cloud { margin-left: 21px; }
.zh { width: 20px; margin-left: 19px; font: 19px/24px "Noto Sans CJK SC", sans-serif; }
.zh + .zh { margin-left: 29px; }
.wifi { margin-left: 25px; }
.spk { margin-left: 8px; }
.bat { margin-left: 8px; }
.clock { width: 92px; margin-left: 5px; text-align: right; font-size: 14.500px; line-height: 20px; }
.bell { margin-left: 10px; }
```
